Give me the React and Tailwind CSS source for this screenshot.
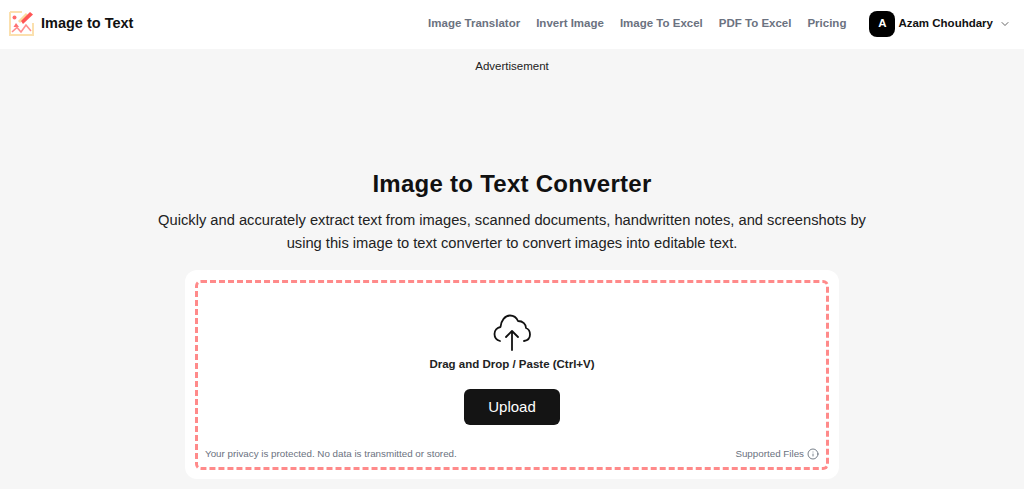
import { ChevronDown, Info } from "lucide-react"

const navLinks = ["Image Translator", "Invert Image", "Image To Excel", "PDF To Excel", "Pricing"]

function Logo() {
  return (
    <svg width="25" height="25" viewBox="0 0 25 25" fill="none">
      <path d="M1 1H13M1 1V24H24V12" stroke="#fbe0ae" strokeWidth="2" />
      <path d="M10 11L18 3" stroke="#fbdca0" strokeWidth="3" />
      <path d="M14 13L24 3.5L21 1L12 10Z" fill="#ff5555" />
      <circle cx="5.5" cy="6.5" r="2" fill="#ff6b6b" />
      <path d="M7 12L10 16H4.5Z" fill="#ff7070" />
      <path d="M3 21L8 16.5L12 21L17 14L22 20" stroke="#ff8f8f" strokeWidth="1.6" />
    </svg>
  )
}

export default function App() {
  return (
    <div className="h-[489px] overflow-hidden bg-[#f6f6f6] font-['Liberation_Sans',Arial,sans-serif] text-black">
      <header className="flex h-[49px] items-center justify-between bg-white pr-[13px] pb-[2px] pl-[9px]">
        <div className="flex items-center gap-[7px]">
          <Logo />
          <span className="text-[14.5px] font-bold text-[#111]">Image to Text</span>
        </div>
        <div className="flex items-center">
          <nav className="flex gap-4">
            {navLinks.map((link) => (
              <a key={link} className="text-[11.5px] font-bold text-[#6b7280]">
                {link}
              </a>
            ))}
          </nav>
          <div className="ml-[23px] flex items-center">
            <div className="flex h-[26px] w-[26px] items-center justify-center rounded-lg bg-black text-[11.5px] font-bold text-white">
              A
            </div>
            <span className="ml-[3px] text-[11.5px] font-bold text-[#111]">Azam Chouhdary</span>
            <ChevronDown size={12} strokeWidth={1.5} className="ml-[6px] text-[#333]" />
          </div>
        </div>
      </header>

      <p className="mt-[10px] text-center text-[11.5px] leading-[14px] text-[#222]">Advertisement</p>

      <main className="flex flex-col items-center">
        <h1 className="mt-[95px] text-2xl leading-[32px] font-bold tracking-[0.27px] text-[#111]">
          Image to Text Converter
        </h1>
        <p className="mt-[9px] w-[720px] text-center text-[14.7px] leading-[23px] text-[#222]">
          Quickly and accurately extract text from images, scanned documents, handwritten notes, and screenshots by using this image to text converter to convert images into editable text.
        </p>

        <section className="mt-[15px] w-[654px] rounded-xl bg-white p-[10px] pb-[9px]">
          <div className="flex h-[190px] flex-col items-center rounded-md border-[3px] border-dashed border-[#ff8a8a] px-[7px] pt-[31px]">
            <svg width="38" height="38" viewBox="0 0 38 38" fill="none" stroke="#111" strokeWidth="1.8" strokeLinecap="round" strokeLinejoin="round">
              <path d="M7 27C3.5 26 1.5 23.5 1.5 20C1.5 16.5 4 13.5 7.5 13C8 6.5 12 1.5 17 1.5C20.5 1.5 23.5 3.5 25 7C30 7 33 10.5 33 14C35.5 15 37 17.5 37 20.5C37 24 34.5 26.5 31 27" />
              <path d="M19 36V17M13 23L19 17L25 23" />
            </svg>
            <p className="mt-[4px] text-[11.5px] leading-[16px] font-bold text-[#222]">Drag and Drop / Paste (Ctrl+V)</p>
            <button className="mt-[17px] h-[36px] w-[96px] rounded-md bg-[#141414] text-[15px] text-white">Upload</button>
            <div className="mt-auto mb-[6px] flex w-full items-center justify-between">
              <span className="text-[9.8px] leading-[14px] text-[#6b7280]">Your privacy is protected. No data is transmitted or stored.</span>
              <span className="flex items-center gap-[3px] text-[9.8px] leading-[14px] text-[#6b7280]">
                Supported Files
                <Info size={12} strokeWidth={1.5} className="text-[#4b5563]" />
              </span>
            </div>
          </div>
        </section>
      </main>
    </div>
  )
}
